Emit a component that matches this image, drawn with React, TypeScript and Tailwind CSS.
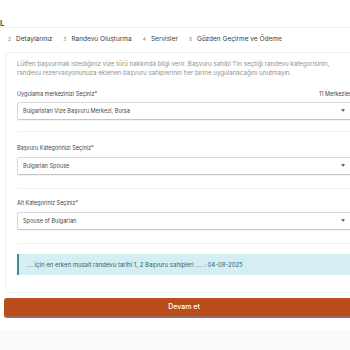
import React from "react";

function Select({ value }: { value: string }) {
  return (
    <div className="h-[18px] w-full border border-[#d9d9d9] border-b-[#c6c6c6] rounded-[2px] bg-white flex items-center justify-between pl-[5px] pr-[6px] shadow-[0_1px_1px_rgba(0,0,0,0.06)]">
      <span className="text-[5.6px] text-[#4a4a4a]">{value}</span>
      <span className="text-[4px] text-[#666] leading-none">▼</span>
    </div>
  );
}

function Step({ n, label }: { n: string; label: string }) {
  return (
    <div className="flex items-center gap-[5px]">
      <span className="text-[5px] text-[#888]">{n}</span>
      <span className="text-[6.5px] text-[#3a3a3a]">{label}</span>
    </div>
  );
}

export default function App() {
  return (
    <div
      className="w-[350px] h-[350px] overflow-hidden bg-white relative"
      style={{ fontFamily: "Inter, 'Open Sans', sans-serif" }}
    >
      <div className="w-[364px]">
        <div className="h-[28px] border-b border-[#f3f3f3] pt-[8px]">
          <span className="text-[8px] font-bold text-[#555] leading-none">L</span>
        </div>
        <div className="h-[24px] flex items-center pl-[8px] gap-[11px]">
          <Step n="2" label="Detaylarınız" />
          <Step n="3" label="Randevu Oluşturma" />
          <Step n="4" label="Servisler" />
          <Step n="5" label="Gözden Geçirme ve Ödeme" />
        </div>
        <div className="ml-[5px] border border-[#f0f0f0] rounded-[3px] bg-white px-[11px] pt-[6px] h-[241px]">
          <p className="text-[6.2px] leading-[9px] text-[#8f8f8f]">
            Lütfen başvurmak istediğiniz vize türü hakkında bilgi verir. Başvuru sahibi 1'in seçtiği randevu kategorisinin,
            <br />
            randevu rezervasyonunuza eklenen başvuru sahiplerinin her birine uygulanacağını unutmayın.
          </p>
          <div className="mt-[13px] flex justify-between items-center h-[8px] pr-[1px]">
            <span className="text-[5.5px] text-[#444]">Uygulama merkezinizi Seçiniz*</span>
            <span className="text-[5.5px] text-[#444]">11 Merkezler</span>
          </div>
          <div className="mt-[4px]">
            <Select value="Bulgaristan Vize Başvuru Merkezi, Bursa" />
          </div>
          <div className="mt-[11px] h-px bg-[#f3f3f3]" />
          <div className="mt-[12px] h-[8px] flex items-center">
            <span className="text-[5.5px] text-[#444]">Başvuru Kategorinizi Seçiniz*</span>
          </div>
          <div className="mt-[5px]">
            <Select value="Bulgarian Spouse" />
          </div>
          <div className="mt-[13px] h-px bg-[#f3f3f3]" />
          <div className="mt-[10px] h-[8px] flex items-center">
            <span className="text-[5.5px] text-[#444]">Alt Kategoriniz Seçiniz*</span>
          </div>
          <div className="mt-[5px]">
            <Select value="Spouse of Bulgarian" />
          </div>
          <div className="mt-[13px] h-px bg-[#f3f3f3]" />
          <div className="mt-[10px] h-[21px] bg-[#d5eef3] border-l-[2px] border-[#3a9099] flex items-center pl-[7px]">
            <span className="text-[6px] text-[#2a6470]">
              .... için en erken musait randevu tarihi 1, 2 Başvuru sahipleri .... : 04-08-2025
            </span>
          </div>
        </div>
        <div className="mt-[5px] ml-[4px] h-[20px] rounded-[3px] bg-[#b94d1c] border-b-[2px] border-[#9b6b5c] flex items-center justify-center">
          <span className="text-[7px] text-white font-medium">Devam et</span>
        </div>
        <div className="mt-[12px] h-[40px] bg-[#f9f9f9]" />
      </div>
    </div>
  );
}
